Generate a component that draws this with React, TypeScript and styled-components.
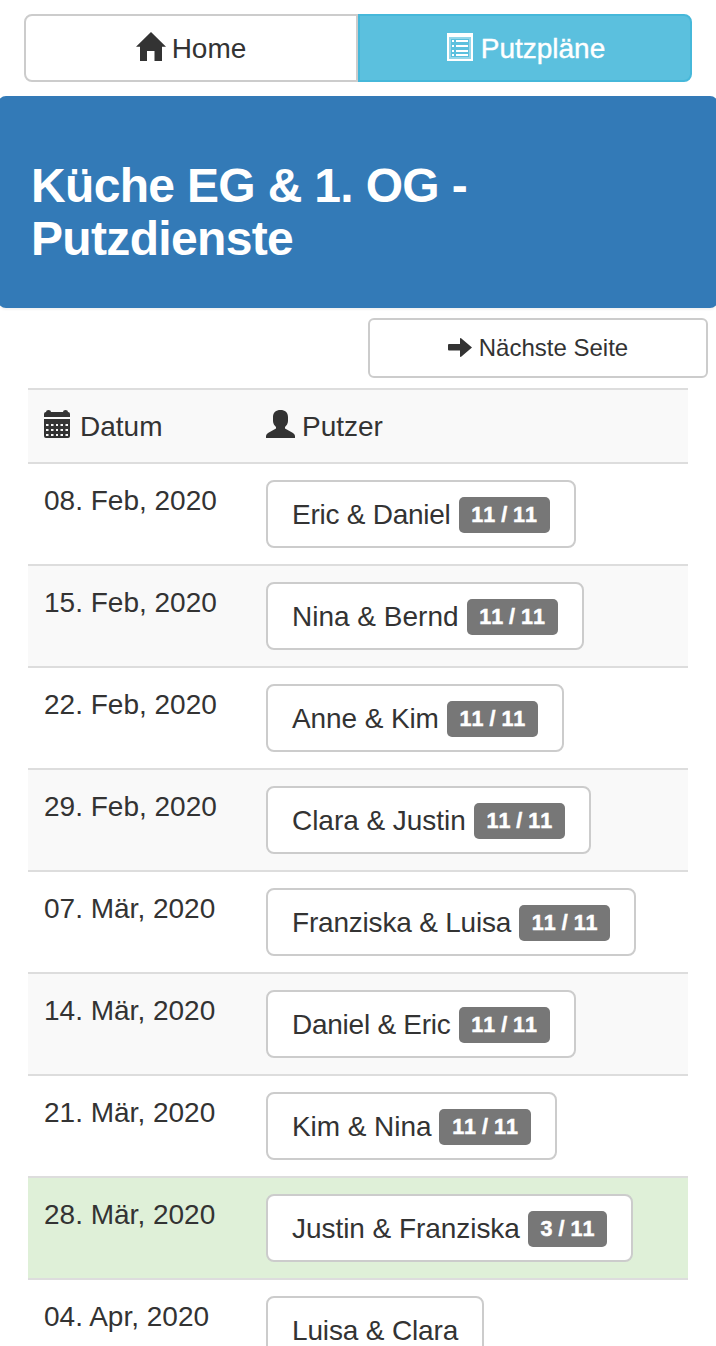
import React from "react";
import styled, { createGlobalStyle } from "styled-components";

const GlobalStyle = createGlobalStyle`
  * { box-sizing: border-box; }
  body {
    margin: 0;
    height: 1346px;
    overflow: hidden;
    background: #fff;
    color: #333;
    font: 28px/40px "Liberation Sans", Arial, sans-serif;
  }
`;

const Nav = styled.nav`
  display: flex;
  margin: 14px 24px;
`;

const NavButton = styled.a<{ $active?: boolean }>`
  flex: 0 0 50%;
  height: 68px;
  display: flex;
  align-items: center;
  justify-content: center;
  gap: ${(p) => (p.$active ? 8 : 6)}px;
  padding-left: ${(p) => (p.$active ? 2 : 0)}px;
  border: 2px solid ${(p) => (p.$active ? "#46b8da" : "#ccc")};
  background: ${(p) => (p.$active ? "#5bc0de" : "#fff")};
  color: ${(p) => (p.$active ? "#fff" : "#333")};
  border-radius: ${(p) => (p.$active ? "0 8px 8px 0" : "8px 0 0 8px")};
  -webkit-text-stroke: ${(p) => (p.$active ? 0.4 : 0)}px currentColor;

  svg { margin-bottom: 2px; }
`;

const Label = styled.span`
  padding-top: 2px;
  white-space: nowrap;
`;

const Names = styled(Label)<{ $tracking: number }>`
  letter-spacing: ${(p) => p.$tracking}px;
`;

const Banner = styled.header`
  height: 212px;
  margin: 0 -2px;
  padding: 63px 33px 0;
  border-radius: 8px;
  background: #337ab7;
  box-shadow: 0 2px 2px rgba(0, 0, 0, 0.05);
`;

const Title = styled.h2`
  width: 480px;
  margin: 0;
  color: #fff;
  font-size: 48px;
  line-height: 53px;
  font-weight: 700;
  letter-spacing: -0.67px;
`;

const Pager = styled.div`
  display: flex;
  justify-content: flex-end;
  padding: 10px 8px;
`;

const PageButton = styled.button`
  width: 340px;
  height: 60px;
  display: flex;
  align-items: center;
  justify-content: center;
  gap: 7px;
  padding: 0;
  border: 2px solid #ccc;
  border-radius: 6px;
  background: #fff;
  color: #333;
  font: 24px/36px "Liberation Sans", Arial, sans-serif;

  svg { margin-bottom: 2px; }
`;

const Table = styled.main`
  margin: 0 28px;
`;

const Row = styled.div<{ $tone?: "striped" | "current" }>`
  display: grid;
  grid-template-columns: 222px 1fr;
  align-items: start;
  padding: 16px 0;
  border-top: 2px solid #ddd;
  background: ${(p) =>
    p.$tone === "current" ? "#dff0d8" : p.$tone === "striped" ? "#f9f9f9" : "#fff"};
`;

const Cell = styled.div`
  display: flex;
  align-items: center;
  padding: 0 16px;
`;

const TextCell = styled(Cell)<{ $gap?: number }>`
  height: 40px;
  gap: ${(p) => p.$gap ?? 8}px;

  svg { margin-bottom: 4px; }
`;

const CleanerButton = styled.button`
  height: 68px;
  display: flex;
  align-items: center;
  gap: 8px;
  padding: 0 24px;
  border: 2px solid #ccc;
  border-radius: 8px;
  background: #fff;
  color: #333;
  font: 28px/40px "Liberation Sans", Arial, sans-serif;
  white-space: nowrap;
`;

const Badge = styled.span`
  height: 36px;
  margin-top: 2px;
  padding: 0 12.7px;
  border-radius: 5px;
  background: #777;
  color: #fff;
  font-size: 21.5px;
  font-weight: 700;
  font-kerning: none;
  line-height: 37px;
  -webkit-text-stroke: 0.5px #fff;
`;

const HomeIcon = () => (
  <svg width="30" height="30" viewBox="0 0 30 30" fill="currentColor">
    <path d="M15 0 30 14.7H26V29H18.5V19H11V29H4V14.7H0Z" />
  </svg>
);

const ListIcon = () => (
  <svg width="26" height="28" viewBox="0 0 26 28" fill="currentColor">
    <path fillRule="evenodd" d="M0 0H26V28H0ZM2 4V26H24V4Z" />
    <path
      fillRule="evenodd"
      d="M2 4H24V26H2ZM4 6V24H22V6Z"
      opacity="0.35"
    />
    <path d="M5 7h2v2H5zM9 7h12v2H9zM5 12h2v2H5zM9 12h12v2H9zM5 17h2v2H5zM9 17h12v2H9zM5 21h2v2H5zM9 21h12v2H9z" />
  </svg>
);

const ArrowIcon = () => (
  <svg width="24" height="19" viewBox="0 0 24 19" fill="currentColor">
    <path d="M1 6H12V1Q12-1 14 1L24 9.500 14 18Q12 20 12 18V12.500H1Q0 12.500 0 11.500V7Q0 6 1 6Z" />
  </svg>
);

const CalendarIcon = () => (
  <svg width="26" height="28" viewBox="0 0 26 28" fill="currentColor">
    <path d="M0 7V4Q0 2 2 2Q2 0 4.500 0Q7 0 7 2H19Q19 0 21.500 0Q24 0 24 2Q26 2 26 4V7Z" />
    <path
      fillRule="evenodd"
      d="M0 9H26V26Q26 28 24 28H2Q0 28 0 26ZM2 14v2h2.500v-2zM7 14v2h2.500v-2zM12 14v2h2v-2zM16.500 14v2h2.500v-2zM21.500 14v2h2.500v-2zM2 19v2h2.500v-2zM7 19v2h2.500v-2zM12 19v2h2v-2zM16.500 19v2h2.500v-2zM21.500 19v2h2.500v-2zM2 24v2h2.500v-2zM7 24v2h2.500v-2zM12 24v2h2v-2zM16.500 24v2h2.500v-2zM21.500 24v2h2.500v-2z"
    />
  </svg>
);

const UserIcon = () => (
  <svg width="29" height="28" viewBox="0 0 29 28" fill="currentColor">
    <path d="M14.500 0C19 0 22 2.500 22 7V11C22 13.500 20.500 15.500 19 17V18.500L27 23Q29 24.500 29 26V28H0V26Q0 24.500 2 23L10 18.500V17C8.500 15.500 7 13.500 7 11V7C7 2.500 10 0 14.500 0Z" />
  </svg>
);

const duties = [
  { date: "08. Feb, 2020", names: "Eric & Daniel", tracking: -0.25, count: "11 / 11" },
  { date: "15. Feb, 2020", names: "Nina & Bernd", tracking: 0, count: "11 / 11" },
  { date: "22. Feb, 2020", names: "Anne & Kim", tracking: -0.1, count: "11 / 11" },
  { date: "29. Feb, 2020", names: "Clara & Justin", tracking: -0.04, count: "11 / 11" },
  { date: "07. Mär, 2020", names: "Franziska & Luisa", tracking: -0.2, count: "11 / 11" },
  { date: "14. Mär, 2020", names: "Daniel & Eric", tracking: -0.25, count: "11 / 11" },
  { date: "21. Mär, 2020", names: "Kim & Nina", tracking: -0.06, count: "11 / 11" },
  { date: "28. Mär, 2020", names: "Justin & Franziska", tracking: -0.05, count: "3 / 11", current: true },
  { date: "04. Apr, 2020", names: "Luisa & Clara", tracking: -0.15 },
];

export default function App() {
  return (
    <>
      <GlobalStyle />
      <Nav>
        <NavButton><HomeIcon /><Label>Home</Label></NavButton>
        <NavButton $active><ListIcon /><Label>Putzpläne</Label></NavButton>
      </Nav>
      <Banner>
        <Title>Küche EG &amp; 1. OG - Putzdienste</Title>
      </Banner>
      <Pager>
        <PageButton><ArrowIcon /><span>Nächste Seite</span></PageButton>
      </Pager>
      <Table>
        <Row $tone="striped">
          <TextCell $gap={10}><CalendarIcon /><Label>Datum</Label></TextCell>
          <TextCell $gap={7}><UserIcon /><Label>Putzer</Label></TextCell>
        </Row>
        {duties.map((d, i) => (
          <Row key={d.date} $tone={d.current ? "current" : i % 2 ? "striped" : undefined}>
            <TextCell><Label>{d.date}</Label></TextCell>
            <Cell>
              <CleanerButton>
                <Names $tracking={d.tracking}>{d.names}</Names>
                {d.count && <Badge>{d.count}</Badge>}
              </CleanerButton>
            </Cell>
          </Row>
        ))}
      </Table>
    </>
  );
}
